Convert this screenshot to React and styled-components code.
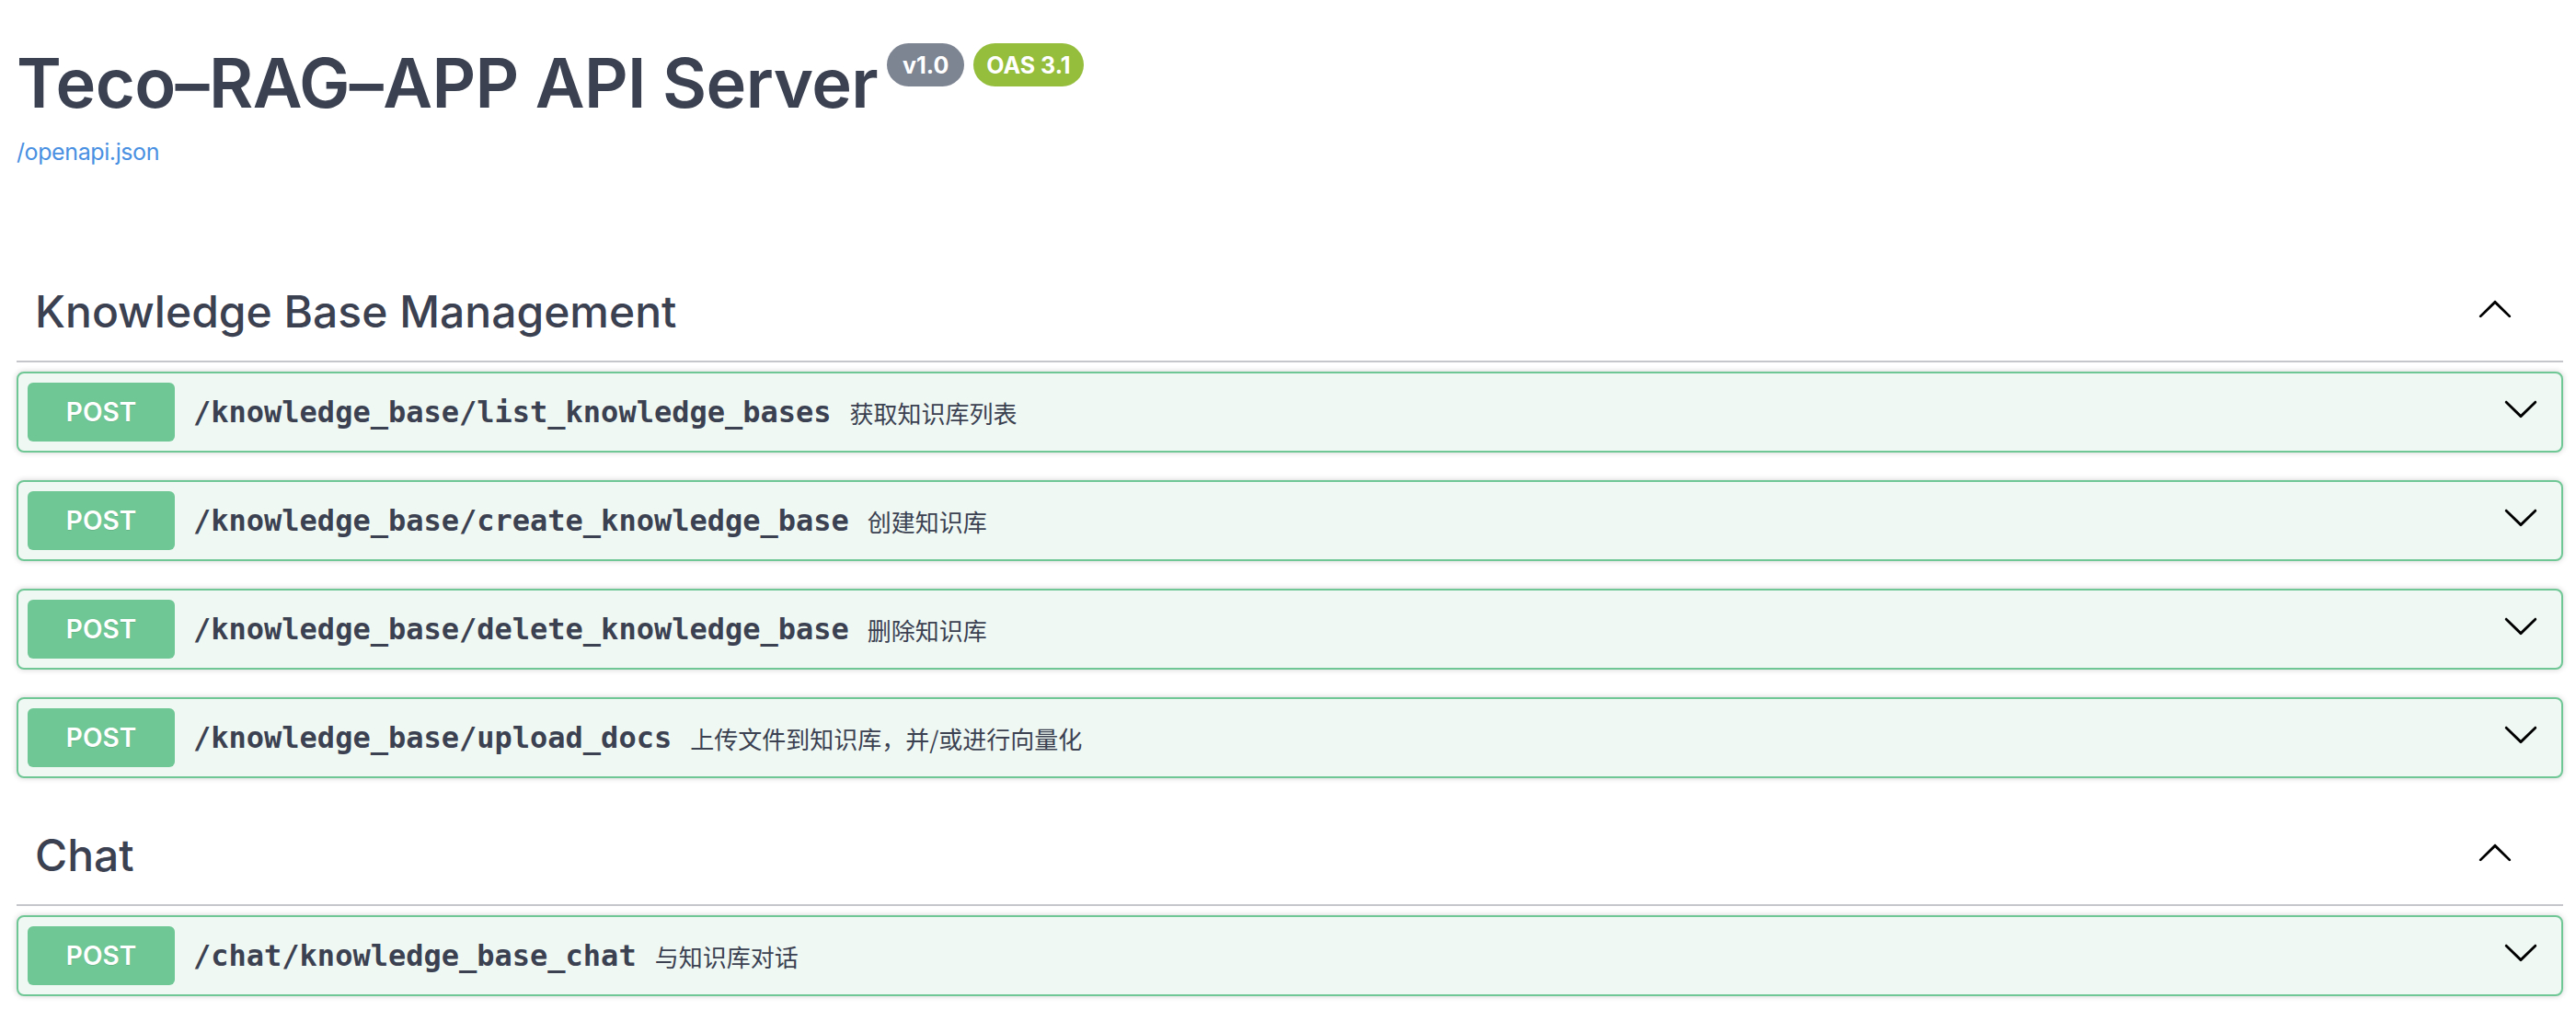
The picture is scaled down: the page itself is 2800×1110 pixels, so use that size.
import React from 'react';
import styled, { createGlobalStyle } from 'styled-components';

const GlobalStyle = createGlobalStyle`
  body {
    margin: 0;
    background: #fff;
    font-family: Inter, "Liberation Sans", "Noto Sans CJK SC", sans-serif;
    color: #3b4151;
  }
`;

const Page = styled.div`
  padding: 0 14px 40px 18px;
`;

const Info = styled.div`
  padding-top: 48px;
`;

const TitleRow = styled.div`
  display: flex;
  align-items: flex-start;
  gap: 10px;
`;

const Title = styled.h2`
  margin: 0;
  font-size: 74px;
  line-height: 85px;
  font-weight: 600;
  letter-spacing: -0.6px;
  color: #3b4151;
`;

const Stamp = styled.span`
  display: inline-flex;
  align-items: center;
  height: 47px;
  margin-top: -1px;
  padding: 0 ${p => p.$pad}px;
  border-radius: 24px;
  background: ${p => p.$bg};
  color: #fff;
  font-size: 25px;
  font-weight: 700;
`;

const SpecLink = styled.a`
  display: inline-block;
  margin-top: 15px;
  font-size: 25px;
  line-height: 34px;
  letter-spacing: -0.4px;
  color: #4990e2;
  text-decoration: none;
`;

const Sections = styled.div`
  margin-top: 103px;
`;

const TagRow = styled.div`
  display: flex;
  align-items: center;
  padding: 19px 54px 19px 20px;
  border-bottom: 2px solid #c4c6cb;
  margin-bottom: 10px;
`;

const TagName = styled.h3`
  flex: 1;
  margin: 0;
  font-size: 48px;
  line-height: 69px;
  font-weight: 500;
  color: #3b4151;
`;

const Chevron = styled.svg`
  width: 40px;
  height: 40px;
  flex: none;
  margin-bottom: ${p => p.$lift}px;
  fill: #000;
`;

const Block = styled.div`
  display: flex;
  align-items: center;
  margin-bottom: 30px;
  padding: 10px 24px 10px 10px;
  border: 2px solid #6fc795;
  border-radius: 8px;
  background: #eff8f3;
  box-shadow: 0 0 6px rgba(0, 0, 0, 0.19);
`;

const Method = styled.span`
  display: flex;
  align-items: center;
  justify-content: center;
  width: 160px;
  height: 64px;
  flex: none;
  border-radius: 6px;
  background: #6fc795;
  color: #fff;
  font-size: 28px;
  font-weight: 600;
  text-shadow: 0 1px 0 rgba(0, 0, 0, 0.1);
`;

const Path = styled.span`
  padding: 0 20px;
  font-family: "DejaVu Sans Mono", "Liberation Mono", monospace;
  font-size: 32px;
  font-weight: 700;
  color: #3b4151;
`;

const Summary = styled.span`
  flex: 1;
  font-family: "Noto Sans CJK SC", sans-serif;
  font-size: 26px;
  color: #3b4151;
`;

const DOWN = 'M17.418 6.109c.272-.268.709-.268.979 0s.271.701 0 .969l-7.908 7.83c-.27.268-.707.268-.979 0l-7.908-7.83c-.27-.268-.27-.701 0-.969.271-.268.709-.268.979 0L10 13.25l7.418-7.141z';
const UP = 'M17.418 14.908c.272.268.709.268.979 0s.271-.701 0-.969l-7.908-7.83c-.27-.268-.707-.268-.979 0l-7.908 7.83c-.27.268-.27.701 0 .969.271.268.709.268.979 0L10 7.767l7.418 7.141z';

const sections = [
  {
    name: 'Knowledge Base Management',
    ops: [
      ['/knowledge_base/list_knowledge_bases', '获取知识库列表'],
      ['/knowledge_base/create_knowledge_base', '创建知识库'],
      ['/knowledge_base/delete_knowledge_base', '删除知识库'],
      ['/knowledge_base/upload_docs', '上传文件到知识库，并/或进行向量化'],
    ],
  },
  {
    name: 'Chat',
    ops: [['/chat/knowledge_base_chat', '与知识库对话']],
  },
];

export default function App() {
  return (
    <Page>
      <GlobalStyle />
      <Info>
        <TitleRow>
          <Title>Teco–RAG–APP API Server</Title>
          <Stamp $bg="#7d8492" $pad={17}>v1.0</Stamp>
          <Stamp $bg="#95be3c" $pad={14}>OAS 3.1</Stamp>
        </TitleRow>
        <SpecLink href="#">/openapi.json</SpecLink>
      </Info>
      <Sections>
        {sections.map(sec => (
          <div key={sec.name}>
            <TagRow>
              <TagName>{sec.name}</TagName>
              <Chevron viewBox="0 0 20 20" $lift={7}>
                <path d={UP} />
              </Chevron>
            </TagRow>
            {sec.ops.map(([path, text]) => (
              <Block key={path}>
                <Method>POST</Method>
                <Path>{path}</Path>
                <Summary>{text}</Summary>
                <Chevron viewBox="0 0 20 20" $lift={8}>
                  <path d={DOWN} />
                </Chevron>
              </Block>
            ))}
          </div>
        ))}
      </Sections>
    </Page>
  );
}
